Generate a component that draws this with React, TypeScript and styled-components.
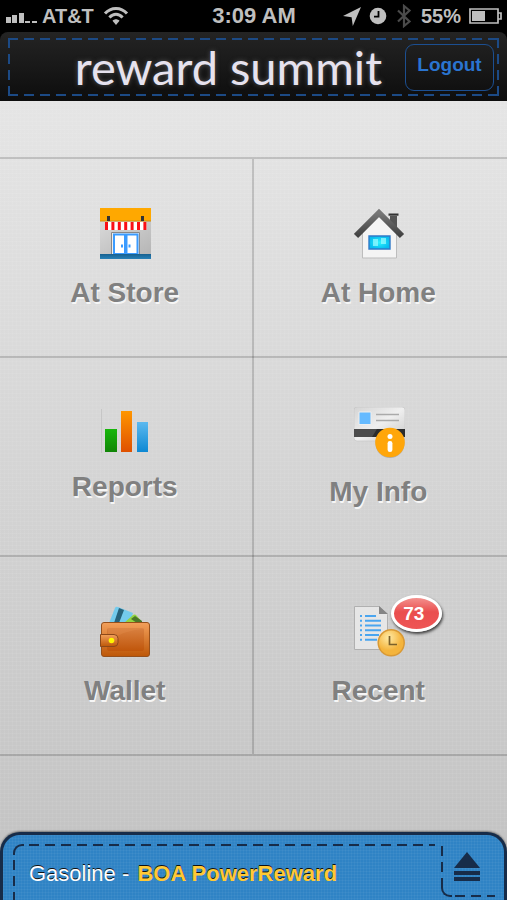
import React from "react";
import styled, { createGlobalStyle, css } from "styled-components";

const GlobalStyle = createGlobalStyle`
  * { box-sizing: border-box; }
  body {
    margin: 0;
    background: #000;
    font-family: "Liberation Sans", Arial, Helvetica, sans-serif;
  }
  button { font-family: inherit; cursor: pointer; }
`;

const dashX = (color: string) =>
  `repeating-linear-gradient(90deg, ${color} 0 10px, transparent 10px 16px)`;
const dashY = (color: string) =>
  `repeating-linear-gradient(180deg, ${color} 0 10px, transparent 10px 16px)`;

const Page = styled.div`
  min-height: 100vh;
  display: flex;
  flex-direction: column;
`;

const StatusBar = styled.div`
  height: 32px;
  display: grid;
  grid-template-columns: 1fr auto 1fr;
  align-items: center;
  padding: 0 5px 0 6px;
  color: #bfbfbf;
  font-size: 20px;
  font-weight: bold;
`;

const StatusGroup = styled.div<{ $end?: boolean }>`
  display: flex;
  align-items: center;
  gap: ${(p) => (p.$end ? 8 : 5)}px;
  justify-content: ${(p) => (p.$end ? "flex-end" : "flex-start")};
`;

const Carrier = styled.span`
  margin-right: 4px;
`;

const Clock = styled.time`
  font-size: 22px;
`;

const Header = styled.header`
  height: 69px;
  padding: 6px 8px;
  border-radius: 8px 8px 0 0;
  background: linear-gradient(#242424, #0d0d0d);
`;

const Stitched = styled.div`
  height: 58px;
  display: flex;
  align-items: center;
  padding: 0 5px 0 10px;
  background:
    ${dashX("#1c4a85")} 0 0 / 100% 2px no-repeat,
    ${dashX("#1c4a85")} 0 100% / 100% 2px no-repeat,
    ${dashY("#1c4a85")} 0 0 / 2px 100% no-repeat,
    ${dashY("#1c4a85")} 100% 0 / 2px 100% no-repeat;
`;

const Logo = styled.h1`
  flex: 1;
  margin: 0;
  padding-right: 23px;
  text-align: right;
  white-space: nowrap;
  font: 400 47px/56px Lato, sans-serif;
  color: #e6e2ee;
  text-shadow: 0 0 5px #555;
`;

const Logout = styled.button`
  width: 89px;
  height: 47px;
  padding: 0 0 4px;
  border: 1px solid #1c4f91;
  border-radius: 9px;
  background: transparent;
  color: #2a74d0;
  font-size: 19px;
  font-weight: bold;
`;

const Main = styled.main`
  flex: 1;
  padding: 56px 0 76px;
  background:
    repeating-linear-gradient(90deg, rgba(255, 255, 255, 0.06) 0 1px, transparent 1px 4px),
    repeating-linear-gradient(180deg, rgba(255, 255, 255, 0.06) 0 1px, transparent 1px 4px),
    linear-gradient(#e5e5e5, #c4c4c4);
`;

const Grid = styled.nav`
  display: grid;
  grid-template-columns: 1fr 1fr;
  grid-auto-rows: 197px;
  gap: 2px;
  padding: 2px 2px 2px 0;
  --line: rgba(0, 0, 0, 0.16);
  background:
    linear-gradient(var(--line), var(--line)) calc(50% - 1px) 2px / 2px calc(100% - 4px) no-repeat,
    repeating-linear-gradient(var(--line) 0 2px, transparent 2px 199px);
`;

const Tile = styled.button`
  display: flex;
  flex-direction: column;
  align-items: center;
  padding: 49px 0 0;
  border: 0;
  background: transparent;
`;

const TileIcon = styled.span`
  position: relative;
  display: flex;
  margin-bottom: 18px;
`;

const TileLabel = styled.span`
  padding-right: 2px;
  font-size: 28px;
  line-height: 32px;
  font-weight: bold;
  color: #808080;
  text-shadow: 1px 2px 0 #f6f6f6;
`;

const Badge = styled.span`
  position: absolute;
  left: 37px;
  top: -11px;
  width: 51px;
  height: 37px;
  border: 3px solid #fff;
  border-radius: 50%;
  background: linear-gradient(#f3908d, #ea4e4e 45%, #ee5555);
  box-shadow: 1px 2px 3px rgba(0, 0, 0, 0.7);
  color: #fff;
  font-size: 19px;
  line-height: 31px;
  font-weight: bold;
  text-align: center;
  padding-right: 5px;
`;

const FooterBack = styled.div`
  background: linear-gradient(#c4c4c4 80%, #000);
`;

const Footer = styled.footer`
  height: 68px;
  display: flex;
  border: 3px solid #172c49;
  border-bottom: 0;
  border-radius: 20px 20px 0 0;
  padding: 9px 9px 0 10px;
  background:
    repeating-linear-gradient(90deg, rgba(255, 255, 255, 0.04) 0 1px, transparent 1px 3px),
    repeating-linear-gradient(180deg, rgba(255, 255, 255, 0.04) 0 1px, transparent 1px 3px),
    #2f83c5;
  box-shadow: 0 -1px 2px rgba(0, 0, 0, 0.4);
`;

const corner = css`
  content: "";
  position: absolute;
  width: 9px;
  height: 9px;
  left: 0;
`;

const Offer = styled.div`
  position: relative;
  flex: 1;
  padding: 16px 0 0 16px;
  font-size: 22px;
  line-height: 28px;
  white-space: nowrap;
  color: #fff;
  text-shadow: 0 -1px 0 #111;
  background:
    ${dashX("#172c49")} 16px 0 / calc(100% - 22px) 2px no-repeat,
    ${dashY("#172c49")} 0 16px / 2px 100% no-repeat;
  &::before {
    ${corner}
    top: 0;
    border-top: 2px solid #172c49;
    border-left: 2px solid #172c49;
    border-top-left-radius: 9px;
  }
`;

const Card = styled.strong`
  margin-left: 2px;
  color: #ffc935;
  text-shadow: 0 -1px 0 #111;
`;

const Expand = styled.button`
  position: relative;
  width: 54px;
  height: 53px;
  padding: 0 3px 6px 0;
  border: 0;
  background:
    ${dashX("#172c49")} 14px 100% / 100% 2px no-repeat,
    ${dashY("#172c49")} 0 2px / 2px 40px no-repeat;
  &::before {
    ${corner}
    bottom: 0;
    border-bottom: 2px solid #172c49;
    border-left: 2px solid #172c49;
    border-bottom-left-radius: 9px;
  }
`;

const SignalIcon = () => (
  <svg width="31" height="16" viewBox="0 0 31 16" fill="currentColor" aria-hidden="true">
    <path d="M0 9h5v6H0zM6 7h5v8H6zM13 5h5v10h-5zM19 13h5v2h-5zM26 13h5v2h-5z" />
  </svg>
);

const WifiIcon = () => (
  <svg width="26" height="20" viewBox="0 0 26 20" fill="none" stroke="currentColor" strokeWidth="3" aria-hidden="true">
    <path d="M2 7.5C8 .7 18 .7 24 7.5M6.4 11.5c4-4.2 9.2-4.2 13.2 0" />
    <path d="M9.5 14.8c2-2 5-2 7 0L13 19z" fill="currentColor" stroke="none" />
  </svg>
);

const LocationIcon = () => (
  <svg width="18" height="19" viewBox="0 0 18 19" fill="currentColor" aria-hidden="true">
    <path d="M18 0 9.8 19 8.6 10.2 0 9z" />
  </svg>
);

const AlarmIcon = () => (
  <svg width="18" height="18" viewBox="0 0 18 18" aria-hidden="true">
    <circle cx="9" cy="9" r="8.3" fill="currentColor" />
    <path d="M9.5 4v5.7H5" fill="none" stroke="#000" strokeWidth="1.8" />
  </svg>
);

const BluetoothIcon = () => (
  <svg width="18" height="24" viewBox="-2 0 18 24" fill="none" stroke="#4b4b4b" strokeWidth="2.2" aria-hidden="true">
    <path d="m1 6.5 11.5 11L7 22V2l5.500 4.500L1 17.500" />
  </svg>
);

const BatteryIcon = () => (
  <svg width="33" height="16" viewBox="0 0 33 16" fill="none" stroke="currentColor" strokeWidth="1.7" aria-hidden="true">
    <path d="M1 1h28v14H1zM29.5 5h2.5v6h-2.5" />
    <path d="M3 3h13v10H3z" fill="currentColor" stroke="none" />
  </svg>
);

const StoreIcon = () => (
  <svg width="51" height="51" viewBox="0 0 51 51" aria-hidden="true">
    <defs>
      <linearGradient id="wall" x2="1" y2="1">
        <stop stopColor="#d9d9d9" /><stop offset="1" stopColor="#b5b5b5" />
      </linearGradient>
      <linearGradient id="step" x2="0" y2="1">
        <stop stopColor="#17608f" /><stop offset="1" stopColor="#2781b8" />
      </linearGradient>
    </defs>
    <path fill="url(#wall)" d="M0 13h51v34H0z" />
    <path fill="#ffa800" d="M0 0h51v13H0z" />
    <path fill="#d18c10" d="M0 12.4h51v1H0z" />
    <path fill="#333" d="M7 8h3v5H7zM41 8h3v5h-3z" />
    <path fill="#fff" d="M5 14h41.400v8H5z" />
    <path fill="#fa0f16" d="M5 14h3v8H5zm6.400 0h3v8h-3zm6.400 0h3v8h-3zm6.400 0h3v8h-3zm6.400 0h3v8h-3zm6.400 0h3v8h-3zm6.400 0h3v8h-3z" />
    <path d="M11.500 46V24.500h28V46" fill="#eee" stroke="#888" />
    <path d="M14 26.500h11V46H14zM26.500 26.500h11V46h-11z" fill="#fff" stroke="#3a9bff" strokeWidth="2" />
    <path d="M21 36.500h2v3h-2zM28.500 36.500h2v3h-2z" fill="#3a9bff" />
    <path fill="url(#step)" d="M0 46h51v5H0z" />
  </svg>
);

const HomeIcon = () => (
  <svg width="51" height="51" viewBox="0 0 51 51" aria-hidden="true">
    <defs>
      <linearGradient id="roof" x2="0" y2="1">
        <stop stopColor="#777" /><stop offset="1" stopColor="#414141" />
      </linearGradient>
      <radialGradient id="pane"><stop stopColor="#2cf4ff" /><stop offset="1" stopColor="#08bdef" /></radialGradient>
    </defs>
    <path fill="#555" d="M36 8h7v12l-7-7z" />
    <path fill="#333" d="M34.500 5.500h10v2.200h-10z" />
    <path d="M8.500 23 25 8l17.500 15v27H8.500z" fill="#f4f4f4" stroke="#bdbdbd" />
    <path d="m2 28 23-23 23 23" fill="none" stroke="url(#roof)" strokeWidth="6" />
    <path d="M15 28h21v13H15z" fill="url(#pane)" stroke="#3179c8" strokeWidth="1.400" />
    <path d="M19 31h5v7h-5zM27 30h5v6h-5z" fill="#9ffcff" opacity=".7" />
  </svg>
);

const ReportsIcon = () => (
  <svg width="51" height="46" viewBox="0 0 51 46" aria-hidden="true">
    <defs>
      <linearGradient id="barGreen" x2="0" y2="1"><stop stopColor="#17b70b" /><stop offset="1" stopColor="#118507" /></linearGradient>
      <linearGradient id="barOrange" x2="0" y2="1"><stop stopColor="#ff9600" /><stop offset="1" stopColor="#df5000" /></linearGradient>
      <linearGradient id="barBlue" x2="0" y2="1"><stop stopColor="#5cb9ef" /><stop offset="1" stopColor="#0d88d3" /></linearGradient>
    </defs>
    <path d="M1.500 2v44" stroke="#c6c6c6" />
    <path fill="url(#barGreen)" d="M5 22h12v23H5z" />
    <path fill="url(#barOrange)" d="M21 4h11v41H21z" />
    <path fill="url(#barBlue)" d="M37 15h11v30H37z" />
  </svg>
);

const InfoIcon = () => (
  <svg width="51" height="51" viewBox="0 0 51 51" aria-hidden="true">
    <defs>
      <linearGradient id="idCard" x2="1" y2="1"><stop stopColor="#d4d4d4" /><stop offset=".5" stopColor="#efefef" /><stop offset="1" stopColor="#c8c8c8" /></linearGradient>
    </defs>
    <rect y="0" width="51" height="34" rx="3" fill="url(#idCard)" stroke="#c3c3c3" strokeWidth=".6" />
    <path fill="#4b4b4b" d="M0 22h51v8H0z" />
    <path fill="#2c2c2c" d="M23 22h28v8H18z" />
    <path d="M5 5h12v12.500H5z" fill="#65baff" stroke="#eee" />
    <path d="M22 7.500h23M22 13.500h23" stroke="#aaa" strokeWidth="1.500" />
    <circle cx="36" cy="36.500" r="14.500" fill="#888" opacity=".5" />
    <circle cx="36" cy="35.500" r="14.800" fill="#ffa60a" />
    <circle cx="36" cy="29.500" r="2.500" fill="#fff" />
    <rect x="33.600" y="34" width="4.800" height="11" rx="2.300" fill="#fff" />
  </svg>
);

const WalletIcon = () => (
  <svg width="51" height="51" viewBox="0 0 51 51" aria-hidden="true">
    <defs>
      <linearGradient id="leather" x2="0" y2="1"><stop stopColor="#f3a05b" /><stop offset="1" stopColor="#bd5708" /></linearGradient>
      <linearGradient id="flap" x2="0" y2="1"><stop stopColor="#d98141" /><stop offset="1" stopColor="#c0560b" /></linearGradient>
    </defs>
    <path fill="#73cbed" d="M9 17 15 2q1-2 3-1l15 6-3 10z" />
    <path fill="#27637b" d="m14 17 5-15 5 2-5 13z" />
    <path fill="#92d442" d="m24 17 9-8q2-1 3 0l7 8z" />
    <path fill="#4a782a" d="m31 13 4-3 7 5v2h-5z" />
    <rect x="1.500" y="16.500" width="48" height="34" rx="2.500" fill="url(#leather)" stroke="#96501c" />
    <rect x="7" y="22" width="37" height="23" rx="2" fill="url(#flap)" />
    <path d="M8 36q15-12 36-13v-1H8z" fill="#e58e4d" opacity=".35" />
    <path d="M.5 28.500H14q4 0 4 4v4q0 4-4 4H.5z" fill="url(#leather)" stroke="#8d4819" />
    <circle cx="11.500" cy="34.500" r="2.800" fill="#fff600" />
  </svg>
);

const RecentIcon = () => (
  <svg width="51" height="51" viewBox="0 0 51 51" aria-hidden="true">
    <defs>
      <radialGradient id="dial" cx=".4" cy=".3"><stop stopColor="#ffeaa5" /><stop offset="1" stopColor="#f4b43c" /></radialGradient>
    </defs>
    <path d="M.5 .5h25l8 8v35H.5z" fill="#e6e6e6" stroke="#b0b0b0" />
    <path d="M25 0v8h9z" fill="#858585" />
    <g stroke="#4aa5ef" strokeWidth="2">
      <path d="M11 10h11M11 14.700h16M11 19.500h16M11 24.200h16M11 29h14M11 33.700h12" />
      <path d="M6 10h2M6 14.700h2M6 19.500h2M6 24.200h2M6 29h2M6 33.700h2" />
    </g>
    <circle cx="37.200" cy="36.800" r="13" fill="url(#dial)" stroke="#d99935" strokeWidth="1.500" />
    <path d="M35.500 30v8.500H43" fill="none" stroke="#7a602a" strokeWidth="1.700" />
  </svg>
);

const EjectIcon = () => (
  <svg width="26" height="29" viewBox="0 0 26 29" fill="#172c49" aria-hidden="true">
    <path d="m13 0 13 16H0zM0 19h26v4H0zM0 25h26v4H0z" />
  </svg>
);

interface TileData {
  label: string;
  icon: React.ReactNode;
  count?: number;
}

const tiles: TileData[] = [
  { label: "At Store", icon: <StoreIcon /> },
  { label: "At Home", icon: <HomeIcon /> },
  { label: "Reports", icon: <ReportsIcon /> },
  { label: "My Info", icon: <InfoIcon /> },
  { label: "Wallet", icon: <WalletIcon /> },
  { label: "Recent", icon: <RecentIcon />, count: 73 },
];

export default function App() {
  return (
    <Page>
      <GlobalStyle />
      <StatusBar>
        <StatusGroup>
          <SignalIcon />
          <Carrier>AT&amp;T</Carrier>
          <WifiIcon />
        </StatusGroup>
        <Clock>3:09 AM</Clock>
        <StatusGroup $end>
          <LocationIcon />
          <AlarmIcon />
          <BluetoothIcon />
          <span>55%</span>
          <BatteryIcon />
        </StatusGroup>
      </StatusBar>
      <Header>
        <Stitched>
          <Logo>reward summit</Logo>
          <Logout type="button">Logout</Logout>
        </Stitched>
      </Header>
      <Main>
        <Grid>
          {tiles.map((t) => (
            <Tile key={t.label} type="button">
              <TileIcon>
                {t.icon}
                {t.count !== undefined && <Badge>{t.count}</Badge>}
              </TileIcon>
              <TileLabel>{t.label}</TileLabel>
            </Tile>
          ))}
        </Grid>
      </Main>
      <FooterBack>
        <Footer>
          <Offer>
            Gasoline - <Card>BOA PowerReward</Card>
          </Offer>
          <Expand type="button" aria-label="Expand">
            <EjectIcon />
          </Expand>
        </Footer>
      </FooterBack>
    </Page>
  );
}
